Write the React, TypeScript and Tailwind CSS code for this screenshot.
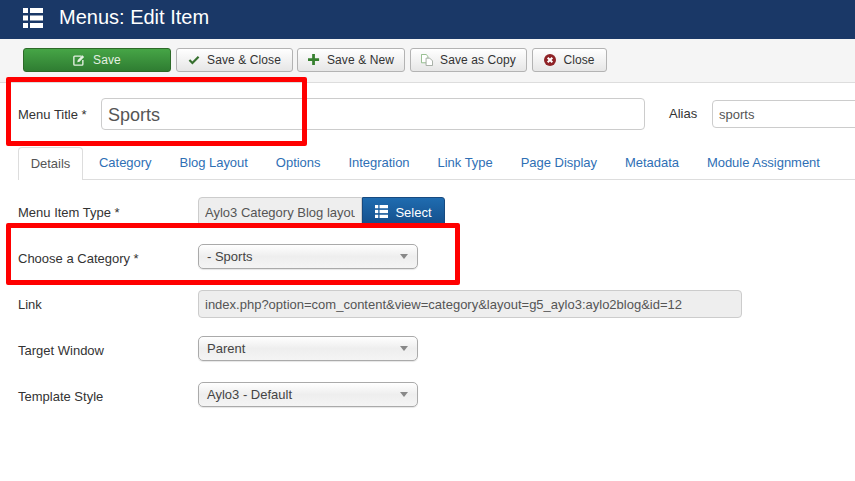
import React from 'react';

const font = "font-['Liberation_Sans',Arial,sans-serif]";

const ListIcon = ({ className }: { className: string }) => (
  <svg viewBox="0 0 20 20" className={className} fill="currentColor">
    <rect x="0" y="0" width="5" height="5" />
    <rect x="7" y="0" width="13" height="5" />
    <rect x="0" y="7.5" width="5" height="5" />
    <rect x="7" y="7.5" width="13" height="5" />
    <rect x="0" y="15" width="5" height="5" />
    <rect x="7" y="15" width="13" height="5" />
  </svg>
);

const EditIcon = () => (
  <svg viewBox="0 0 14 14" className="w-[12px] h-[12px] mr-[8px]" fill="none" stroke="#e4f0e2">
    <path d="M10 2.5H2a1 1 0 0 0-1 1V12a1 1 0 0 0 1 1h8.5a1 1 0 0 0 1-1V7" strokeWidth="1.6" />
    <path d="M5 9.5l.6-2.6L11 1.5l2 2-5.4 5.4z" fill="#e4f0e2" stroke="none" />
  </svg>
);

const CheckIcon = () => (
  <svg viewBox="0 0 14 12" className="w-[12px] h-[10px] mr-[7px]" fill="none" stroke="#37702f" strokeWidth="2.6">
    <path d="M1.5 6l3.6 3.6L12.5 2" />
  </svg>
);

const PlusIcon = () => (
  <svg viewBox="0 0 13 13" className="w-[12px] h-[12px] mr-[7px]" fill="#37802f">
    <path d="M4.5 0h3v4.5H12v3H7.5V12h-3V7.5H0v-3h4.5z" />
  </svg>
);

const CopyIcon = () => (
  <svg viewBox="0 0 13 13" className="w-[12px] h-[12px] mr-[7px]" fill="#fff" stroke="#8cb886">
    <path d="M.5.5h5l2 2v7h-7z" />
    <path d="M5.5 4.5h4l3 3v5h-7z" stroke="#a0a89e" />
  </svg>
);

const CloseIcon = () => (
  <svg viewBox="0 0 13 13" className="w-[12px] h-[12px] mr-[7px]">
    <circle cx="6.5" cy="6.5" r="6.5" fill="#8f2327" />
    <path d="M4 4l5 5M9 4l-5 5" stroke="#fff" strokeWidth="2.2" />
  </svg>
);

const toolbarButton =
  'h-[24px] pt-[1px] flex items-center justify-center rounded-[3px] border border-[#b3b3b3] bg-gradient-to-b from-white to-[#e6e6e6] text-[12px] tracking-[0.1px] text-[#333] shrink-0';

const tabs = ['Category', 'Blog Layout', 'Options', 'Integration', 'Link Type', 'Page Display', 'Metadata', 'Module Assignment'];

const SelectBox = ({ value }: { value: string }) => (
  <div className="ml-[180px] mb-[3px] w-[220px] h-[25px] flex items-center justify-between pl-[8px] pr-[9px] rounded-[5px] border border-[#aaa] bg-gradient-to-b from-white via-[#eeeeee] to-[#f4f4f4] shadow-[0_1px_1px_rgba(0,0,0,0.1)] text-[13px] text-[#444]">
    <span className="mt-[1px]">{value}</span>
    <span className="w-0 h-0 border-x-[4px] border-x-transparent border-t-[5px] border-t-[#888]" />
  </div>
);

const Row = ({ label, children }: { label: string; children: React.ReactNode }) => (
  <div className="h-[46px] flex items-center relative">
    <div className="w-0 pt-[2px] whitespace-nowrap text-[13px] text-[#333]">{label}</div>
    {children}
  </div>
);

export default function App() {
  return (
    <div className={`${font} w-[855px] h-[481px] relative overflow-hidden bg-white`}>
      <header className="h-[39px] bg-[#1a3867] flex items-center pl-[23px] text-white">
        <ListIcon className="w-[20px] h-[20px] -mt-[4px]" />
        <h1 className="ml-[16px] text-[20px] -mt-[6px]">Menus: Edit Item</h1>
      </header>

      <div className="h-[44px] bg-[#f5f5f5] border-b border-[#dddddd] flex items-center pl-[23px] gap-[5px] pb-[2px]">
        <button className="w-[148px] h-[24px] pt-[1px] flex items-center justify-center rounded-[3px] border border-[#2d6a28] bg-gradient-to-b from-[#46a546] to-[#2f7d32] text-[12px] tracking-[0.1px] text-[#e4f0e2] shrink-0">
          <EditIcon />
          Save
        </button>
        <button className={`${toolbarButton} w-[117px]`}>
          <CheckIcon />
          Save &amp; Close
        </button>
        <button className={`${toolbarButton} w-[108px] ml-[-1px]`}>
          <PlusIcon />
          Save &amp; New
        </button>
        <button className={`${toolbarButton} w-[117px]`}>
          <CopyIcon />
          Save as Copy
        </button>
        <button className={`${toolbarButton} w-[75px]`}>
          <CloseIcon />
          Close
        </button>
      </div>

      <div className="pl-[18px] pt-[15px] flex items-center h-[65px] pb-[18px]">
        <label className="w-[83px] shrink-0 pt-[2px] text-[13px] text-[#333]">Menu Title *</label>
        <div className="w-[544px] shrink-0 h-[32px] flex items-center pl-[6px] pt-[2px] rounded-[4px] border border-[#cccccc] text-[18px] text-[#555]">
          Sports
        </div>
        <label className="ml-[24px] w-[43px] shrink-0 text-[13px] text-[#333] -mt-[1px]">Alias</label>
        <div className="w-[160px] h-[28px] flex items-center pl-[6px] pt-[2px] rounded-[4px] border border-[#cccccc] text-[13px] text-[#555] shrink-0">
          sports
        </div>
      </div>

      <nav className="ml-[18px] h-[33px] flex border-b border-[#dddddd] -mt-[1px] text-[13px]">
        <div className="w-[65px] h-[33px] mr-[2px] flex items-center justify-center bg-white border border-b-0 border-[#dddddd] rounded-t-[4px] text-[#555]">
          Details
        </div>
        {tabs.map((t) => (
          <div key={t} className="px-[14px] flex items-center justify-center tracking-[-0.03px] text-[#2f6fb5] whitespace-nowrap">
            {t}
          </div>
        ))}
      </nav>

      <div className="pl-[18px] pt-[9px]">
        <Row label="Menu Item Type *">
          <div className="ml-[180px] flex h-[29px] -mt-[1px]">
            <div className="w-[164px] pl-[6px] pt-[2px] flex items-center rounded-l-[4px] border border-[#cccccc] bg-[#eeeeee] text-[13px] text-[#555]">
              <span className="w-[150px] overflow-hidden whitespace-nowrap">Aylo3 Category Blog layout</span>
            </div>
            <div className="w-[83px] pt-[2px] flex items-center justify-center rounded-r-[3px] border border-[#174a80] bg-gradient-to-b from-[#1f6cb0] to-[#154f8b] text-[13px] text-white">
              <ListIcon className="w-[13px] h-[13px] mr-[7px] -mt-[2px]" />
              Select
            </div>
          </div>
        </Row>
        <Row label="Choose a Category *">
          <SelectBox value="- Sports" />
        </Row>
        <Row label="Link">
          <div className="ml-[180px] w-[544px] h-[28px] flex items-center pl-[6px] pt-[2px] rounded-[4px] border border-[#cccccc] bg-[#eeeeee] text-[13px] text-[#555] whitespace-nowrap">
            index.php?option=com_content&amp;view=category&amp;layout=g5_aylo3:aylo2blog&amp;id=12
          </div>
        </Row>
        <Row label="Target Window">
          <SelectBox value="Parent" />
        </Row>
        <Row label="Template Style">
          <SelectBox value="Aylo3 - Default" />
        </Row>
      </div>

      <div className="absolute left-[6px] top-[77px] w-[301px] h-[69px] border-[5px] border-[#ff0000] rounded-[2px]" />
      <div className="absolute left-[6px] top-[223px] w-[454px] h-[62px] border-[5px] border-[#ff0000] rounded-[2px]" />
    </div>
  );
}
